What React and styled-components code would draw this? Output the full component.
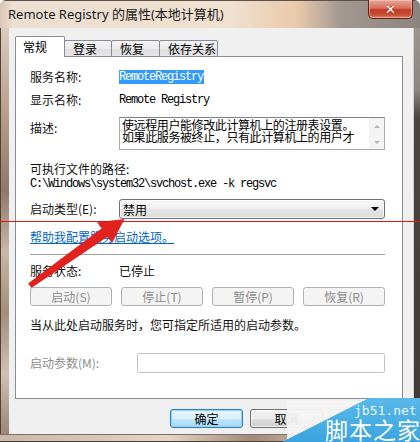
import React from 'react';
import styled, { createGlobalStyle } from 'styled-components';

const UI = `"Noto Sans CJK SC", "Noto Sans", sans-serif`;
const SONG = `"Liberation Mono", "Noto Sans CJK SC", monospace`;

const GlobalStyle = createGlobalStyle`
  html, body {
    margin: 0;
    padding: 0;
    width: 420px;
    height: 442px;
    overflow: hidden;
    background: #fff;
  }
  body {
    font-family: ${UI};
  }
`;

// window chrome
const Window = styled.div`
  position: relative;
  width: 420px;
  height: 442px;
  overflow: hidden;
  display: flex;
  flex-direction: column;
  background: #b9a596;
  border-radius: 6px 6px 0 0;
`;

const TitleBar = styled.div`
  height: 28px;
  flex: none;
  display: flex;
  justify-content: space-between;
  align-items: flex-start;
  background: linear-gradient(
    90deg,
    #d8c7b8 0%,
    #ecdfd2 3%,
    #f0e0cf 55%,
    #e9c9aa 71%,
    #a39892 81%,
    #8b847f 100%
  );
  border-top: 1px solid #5d514a;
  box-sizing: border-box;
`;

const Title = styled.div`
  padding-left: 8px;
  line-height: 26px;
  font-size: 13px;
  color: #1a1a1a;
  font-family: "Noto Sans", ${UI};
  white-space: nowrap;
`;

const CloseButton = styled.div`
  width: 45px;
  height: 19px;
  margin-right: 7px;
  margin-top: -1px;
  box-sizing: border-box;
  border: 1px solid #5a241b;
  border-top: none;
  border-radius: 0 0 5px 5px;
  background: linear-gradient(
    to bottom,
    #e7a897 0%,
    #d9705c 45%,
    #c23a24 55%,
    #c9533a 85%,
    #de8a6e 100%
  );
  box-shadow: inset 0 0 0 1px rgba(255, 220, 210, 0.45);
  display: flex;
  align-items: center;
  justify-content: center;
  color: #fff;
  font-family: "DejaVu Sans", sans-serif;
  font-weight: bold;
  font-size: 13px;
  text-shadow: 0 0 2px #7a2010;
`;

const Body = styled.div`
  flex: 1;
  display: flex;
`;

const LeftFrame = styled.div`
  width: 9px;
  border-left: 1px solid #4e423a;
  box-sizing: border-box;
  background: linear-gradient(
    to bottom,
    #dccbbd 0%,
    #b9a08d 20%,
    #8f7868 40%,
    #cbb7a5 55%,
    #a38c7a 70%,
    #d2c0b0 85%,
    #9c8676 100%
  );
`;

const RightFrame = styled.div`
  width: 7px;
  border-left: 1px solid #d6d0ca;
  box-sizing: border-box;
  background: linear-gradient(
    to bottom,
    #9b948e 0%,
    #8d8681 15%,
    #4b4541 22%,
    #3f3a36 100%
  );
`;

const BottomFrame = styled.div`
  height: 8px;
  flex: none;
  border-bottom: 1px solid #4e423a;
  border-top: 1px solid #7d6f66;
  box-sizing: border-box;
  background: linear-gradient(
    90deg,
    #c8b6a6 0%,
    #e4d4c3 40%,
    #a08a7a 60%,
    #d9c6b5 80%,
    #5d5550 100%
  );
`;

const Client = styled.div`
  flex: 1;
  background: #f0f0f0;
  padding: 8px 10px 0 6px;
  display: flex;
  flex-direction: column;
`;

// tabs
const TabStrip = styled.div`
  height: 21px;
  display: flex;
  align-items: flex-end;
  margin-bottom: -1px;
  position: relative;
  z-index: 1;
`;

const Tab = styled.div`
  width: ${(p) => p.w}px;
  height: ${(p) => (p.active ? 21 : 17)}px;
  box-sizing: border-box;
  border: 1px solid #898c95;
  border-bottom: ${(p) => (p.active ? 'none' : '1px solid #898c95')};
  margin-left: ${(p) => (p.active ? 0 : -1)}px;
  background: ${(p) =>
    p.active ? '#fff' : 'linear-gradient(to bottom, #f3f3f3, #ebebeb 50%, #dedede 51%, #e6e6e6)'};
  border-radius: 2px 2px 0 0;
  font-size: 12px;
  color: #000;
  padding-left: ${(p) => (p.active ? 7 : 8)}px;
  line-height: ${(p) => (p.active ? 19 : 15)}px;
  white-space: nowrap;
`;

const Panel = styled.div`
  width: 388px;
  height: 343px;
  box-sizing: border-box;
  border: 1px solid #898c95;
  background: #fff;
  padding: 0 17px 0 14px;
  display: flex;
  flex-direction: column;
`;

const Row = styled.div`
  display: flex;
  align-items: ${(p) => (p.top ? 'flex-start' : 'center')};
  min-height: ${(p) => p.h || 16}px;
  margin-top: ${(p) => p.mt || 0}px;
`;

const Label = styled.div`
  width: ${(p) => p.w || 89}px;
  flex: none;
  font-size: 12px;
  line-height: 16px;
  color: ${(p) => (p.disabled ? '#8e8e8e' : '#111')};
  white-space: nowrap;
  padding-top: ${(p) => p.pt || 0}px;
`;

const Text = styled.div`
  font-size: 12px;
  line-height: 16px;
  color: #111;
  white-space: nowrap;
`;

const Mono = styled.span`
  font-family: ${SONG};
  font-size: 12px;
  letter-spacing: -1.2px;
  line-height: 14px;
  color: ${(p) => (p.selected ? '#fff' : '#000')};
  background: ${(p) => (p.selected ? '#3399ff' : 'transparent')};
  white-space: nowrap;
  display: inline-block;
  padding-right: ${(p) => (p.selected ? 1 : 0)}px;
`;

const DescBox = styled.div`
  flex: 1;
  height: 33px;
  box-sizing: border-box;
  border: 1px solid #abadb3;
  border-top-color: #7e8289;
  display: flex;
  background: #fff;
`;

const DescText = styled.div`
  flex: 1;
  font-size: 12px;
  line-height: 12px;
  padding: 1px 0 0 2px;
  color: #000;
  letter-spacing: -0.4px;
  white-space: nowrap;
`;

const ScrollBar = styled.div`
  width: 15px;
  background: #f4f4f4;
  display: flex;
  flex-direction: column;
  justify-content: space-between;
  align-items: center;
  padding: 7px 0 5px;
  box-sizing: border-box;
`;

const ScrollArrow = styled.div`
  width: 0;
  height: 0;
  border-left: 3px solid transparent;
  border-right: 3px solid transparent;
  ${(p) => (p.down ? 'border-top: 3px solid #b4b4b4;' : 'border-bottom: 3px solid #b4b4b4;')}
`;

const Combo = styled.div`
  flex: 1;
  height: 20px;
  box-sizing: border-box;
  border: 1px solid #707070;
  border-radius: 3px;
  background: linear-gradient(to bottom, #f7f7f7 0%, #efefef 50%, #e5e5e5 51%, #dcdcdc 100%);
  box-shadow: inset 0 0 0 1px rgba(255, 255, 255, 0.7);
  display: flex;
  align-items: center;
  justify-content: space-between;
  padding: 0 5px 0 3px;
  font-size: 12px;
  color: #000;
`;

const ComboArrow = styled.div`
  width: 0;
  height: 0;
  border-left: 4px solid transparent;
  border-right: 4px solid transparent;
  border-top: 4px solid #000;
`;

const Link = styled.a`
  font-size: 12px;
  line-height: 16px;
  color: #0066cc;
  text-decoration: underline;
  white-space: nowrap;
`;

const Separator = styled.div`
  height: 1px;
  margin-top: 9px;
  background: #a0a0a0;
  border-bottom: 1px solid #fff;
`;

const ButtonGrid = styled.div`
  display: grid;
  grid-template-columns: repeat(4, 1fr);
  column-gap: 9px;
  margin-top: ${(p) => p.mt}px;
`;

const DisabledButton = styled.div`
  height: 19px;
  box-sizing: border-box;
  border: 1px solid #adb2b5;
  border-radius: 3px;
  background: #f4f4f4;
  color: #8c8c8c;
  font-size: 12px;
  display: flex;
  align-items: center;
  justify-content: center;
`;

const Input = styled.div`
  flex: 1;
  height: 20px;
  box-sizing: border-box;
  border: 1px solid #c2c4c8;
  border-radius: 2px;
  background: #fff;
`;

const Footer = styled.div`
  margin-top: 10px;
  display: flex;
  justify-content: flex-end;
  gap: 7px;
`;

const DialogButton = styled.div`
  width: 73px;
  height: 19px;
  box-sizing: border-box;
  border: 1px solid ${(p) => (p.primary ? '#3c7fb1' : '#707070')};
  border-radius: 3px;
  background: ${(p) =>
    p.primary
      ? 'linear-gradient(to bottom, #eaf6fd 0%, #d9f0fc 50%, #bee6fd 51%, #a7d9f5 100%)'
      : 'linear-gradient(to bottom, #f2f2f2 0%, #ebebeb 50%, #dddddd 51%, #cfcfcf 100%)'};
  box-shadow: ${(p) =>
    p.primary ? 'inset 0 0 0 1px #8fd3f7, 0 0 1px #5fb5e8' : 'inset 0 0 0 1px rgba(255,255,255,0.7)'};
  font-size: 12px;
  color: #000;
  display: flex;
  align-items: center;
  justify-content: center;
`;

// annotation overlays
const RedLine = styled.div`
  position: absolute;
  left: 0;
  top: 221px;
  width: 420px;
  height: 1px;
  background: #e8160f;
  z-index: 5;
`;

const ArrowLayer = styled.svg`
  position: absolute;
  left: 0;
  top: 0;
  pointer-events: none;
  z-index: 6;
`;

// pasted jb51 watermark, bottom right
const Watermark = styled.div`
  position: absolute;
  left: 282px;
  top: 398px;
  width: 138px;
  height: 44px;
  z-index: 7;
`;

const WatermarkGlow = styled.div`
  position: absolute;
  inset: 0;
  background: #f3f3f3;
  opacity: 0.95;
  clip-path: polygon(5px 3px, 84px 3px, 5px 42px);
`;

const WatermarkShape = styled.div`
  position: absolute;
  inset: 0;
  background: linear-gradient(to bottom, #5ab9ea, #3ba4de);
  clip-path: polygon(0 44px, 87px 0, 138px 0, 138px 44px);
`;

const WatermarkSmall = styled.div`
  position: absolute;
  left: 72px;
  top: 5px;
  font-family: "DejaVu Sans Mono", "Liberation Mono", monospace;
  font-size: 13px;
  line-height: 15px;
  color: #eaf6fd;
  white-space: nowrap;
`;

const WatermarkBig = styled.div`
  position: absolute;
  left: 43px;
  top: 18px;
  font-family: ${UI};
  font-size: 23px;
  line-height: 26px;
  color: #fff;
  letter-spacing: 1px;
  white-space: nowrap;
`;

const App = () => {
  return (
    <>
      <GlobalStyle />
      <Window>
        <TitleBar>
          <Title>Remote Registry 的属性(本地计算机)</Title>
          <CloseButton>✕</CloseButton>
        </TitleBar>
        <Body>
          <LeftFrame />
          <Client>
            <TabStrip>
              <Tab w={50} active>常规</Tab>
              <Tab w={48}>登录</Tab>
              <Tab w={49}>恢复</Tab>
              <Tab w={59}>依存关系</Tab>
            </TabStrip>
            <Panel>
              <Row mt={12}>
                <Label>服务名称:</Label>
                <Mono selected>RemoteRegistry</Mono>
              </Row>
              <Row mt={7}>
                <Label>显示名称:</Label>
                <Mono>Remote Registry</Mono>
              </Row>
              <Row mt={9} h={33} top>
                <Label pt={3}>描述:</Label>
                <DescBox>
                  <DescText>
                    使远程用户能修改此计算机上的注册表设置。
                    <br />
                    如果此服务被终止，只有此计算机上的用户才
                  </DescText>
                  <ScrollBar>
                    <ScrollArrow />
                    <ScrollArrow down />
                  </ScrollBar>
                </DescBox>
              </Row>
              <Row mt={11}>
                <Text>可执行文件的路径:</Text>
              </Row>
              <Row h={14}>
                <Mono>C:\Windows\system32\svchost.exe -k regsvc</Mono>
              </Row>
              <Row mt={8} h={20}>
                <Label>启动类型(E):</Label>
                <Combo>
                  <span>禁用</span>
                  <ComboArrow />
                </Combo>
              </Row>
              <Row mt={10}>
                <Link>帮助我配置服务启动选项。</Link>
              </Row>
              <Separator />
              <Row mt={7}>
                <Label>服务状态:</Label>
                <Text>已停止</Text>
              </Row>
              <ButtonGrid mt={8}>
                <DisabledButton>启动(S)</DisabledButton>
                <DisabledButton>停止(T)</DisabledButton>
                <DisabledButton>暂停(P)</DisabledButton>
                <DisabledButton>恢复(R)</DisabledButton>
              </ButtonGrid>
              <Row mt={11}>
                <Text>当从此处启动服务时，您可指定所适用的启动参数。</Text>
              </Row>
              <Row mt={20} h={20}>
                <Label w={107} disabled>启动参数(M):</Label>
                <Input />
              </Row>
            </Panel>
            <Footer>
              <DialogButton primary>确定</DialogButton>
              <DialogButton>取消</DialogButton>
              <DialogButton>应用(A)</DialogButton>
            </Footer>
          </Client>
          <RightFrame />
        </Body>
        <BottomFrame />

        <RedLine />
        <ArrowLayer width="420" height="442" viewBox="0 0 420 442">
          <polygon
            points="28.5,283.5 102,228.5 97.5,222.5 124,219.5 112,242.5 107.5,236.5 31.5,287.5"
            fill="#e3221d"
            stroke="#c81612"
            strokeWidth="0.6"
            strokeLinejoin="round"
          />
        </ArrowLayer>
        <Watermark>
          <WatermarkGlow />
          <WatermarkShape />
          <WatermarkSmall>jb51.net</WatermarkSmall>
          <WatermarkBig>脚本之家</WatermarkBig>
        </Watermark>
      </Window>
    </>
  );
};

export default App;
